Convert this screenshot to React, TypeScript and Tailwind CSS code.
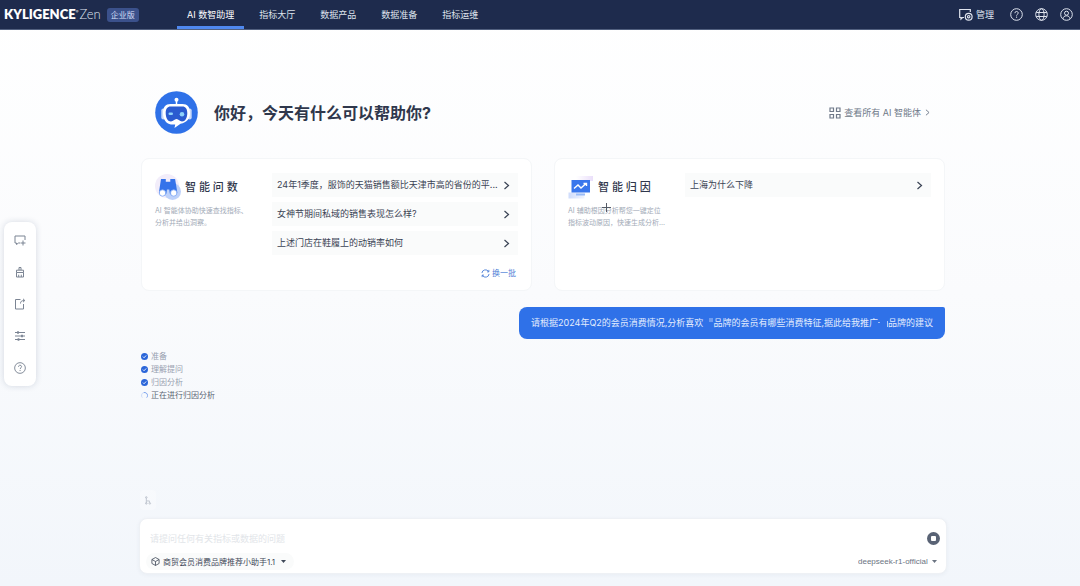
import { useState } from "react";
import type { ReactNode } from "react";

const navItems = ["AI 数智助理", "指标大厅", "数据产品", "数据准备", "指标运维"];

const askQuestions = [
  "24年1季度，服饰的天猫销售额比天津市高的省份的平...",
  "女神节期间私域的销售表现怎么样?",
  "上述门店在鞋履上的动销率如何",
];

const steps = [
  { label: "准备", done: true },
  { label: "理解提问", done: true },
  { label: "归因分析", done: true },
  { label: "正在进行归因分析", done: false },
];

export default function App() {
  const [question, setQuestion] = useState("");

  return (
    <div className="flex min-h-screen flex-col bg-linear-to-b from-white via-[#fafbfd] to-[#f2f6fb] font-[Inter,'Noto_Sans_CJK_SC',sans-serif] text-[#3d4659]">
      <Header />
      <SideTools />

      <main className="mx-auto flex w-full max-w-[816px] flex-1 flex-col pl-1.5">
        <div className="flex flex-1 flex-col px-[3px]">
          <div className="mt-[61px] flex items-center justify-between pr-[14px] pl-[14px]">
            <div className="flex items-center gap-4">
              <RobotAvatar />
              <h1 className="text-base font-bold text-[#2f374c]">你好，今天有什么可以帮助你?</h1>
            </div>
            <a href="#agents" className="flex items-center gap-[3px] text-[9px] text-[#6f7989]">
              <GridIcon />
              查看所有 AI 智能体
              <Chevron className="h-[7px] w-[7px]" />
            </a>
          </div>

          <div className="mt-6 grid grid-cols-2 gap-[22px]">
            <AgentCard
              icon={<BinocularsIcon />}
              title="智 能 问 数"
              lines={["AI 智能体协助快速查找指标、", "分析并给出洞察。"]}
              questions={askQuestions}
              refresh
            />
            <AgentCard
              icon={<ChartIcon />}
              title="智 能 归 因"
              lines={["AI 辅助根因分析帮您一键定位", "指标波动原因，快速生成分析..."]}
              questions={["上海为什么下降"]}
            />
          </div>

          <div className="mt-4 flex h-8 items-center self-end rounded-lg rounded-tr-xs bg-[#2f71e8] px-3 text-[9px] whitespace-nowrap text-[#e3ecfd]">
            <span>请根据2024年Q2的会员消费情况,分析喜欢</span>
            <span className="flex h-2.5 w-2.5 justify-end">
              <span className="h-1 w-1 bg-[#6e9cf0]" />
            </span>
            <span>品牌的会员有哪些消费特征,据此给我推广</span>
            <span className="flex h-2 w-2.5 items-end justify-between">
              <span className="mb-1 h-px w-0.5 bg-[#9dbcf5]" />
              <span className="h-1.5 w-px bg-[#b4ccf8]" />
            </span>
            <span>品牌的建议</span>
          </div>

          <ul className="mt-[11px] text-[8px] leading-[13px]">
            {steps.map((step) => (
              <li key={step.label} className={`flex items-center gap-[3px] ${step.done ? "text-[#98a1b0]" : "text-[#5b6473]"}`}>
                {step.done ? <DoneIcon /> : <LoadingIcon />}
                {step.label}
              </li>
            ))}
          </ul>
        </div>

        <button aria-label="拆解" className="mb-2 ml-0.5 flex h-5 w-4 items-center justify-center rounded-sm bg-white/30 text-[#bcc2cc]">
          <svg viewBox="0 0 8 10" className="h-[9px] w-[7px]" fill="none" stroke="currentColor">
            <path d="M1.5 2v6.5M1.5 5.5h3.5v2" />
            <circle cx="1.5" cy="1.5" r=".9" />
            <circle cx="1.5" cy="8.3" r=".9" />
            <circle cx="5.5" cy="8.3" r=".9" />
          </svg>
        </button>

        <form
          onSubmit={(e) => e.preventDefault()}
          className="mx-px mb-3 rounded-lg border border-[#eef1f5] bg-white pt-3 pr-1.5 pb-[3px] pl-1.5 shadow-[0_1px_4px_rgba(40,60,100,0.05)]"
        >
          <div className="flex items-center pl-1">
            <input
              aria-label="提问"
              value={question}
              onChange={(e) => setQuestion(e.target.value)}
              placeholder="请提问任何有关指标或数据的问题"
              className="h-[14px] min-w-0 flex-1 bg-transparent text-[9px] outline-none placeholder:text-[#e2e5e9]"
            />
            <button aria-label="停止" className="flex h-[13px] w-[13px] items-center justify-center rounded-full bg-[#596375]">
              <span className="h-[5px] w-[5px] rounded-[1px] bg-white" />
            </button>
          </div>
          <div className="mt-2 flex items-center justify-between text-[8px]">
            <label className="flex h-[17px] items-center gap-[3px] rounded-full bg-[#fafbfb] pr-2 pl-[5px] text-[#3f4858]">
              <CubeIcon />
              <select aria-label="智能体" className="mr-0.5 appearance-none bg-transparent outline-none">
                <option>商贸会员消费品牌推荐小助手1.1</option>
              </select>
              <Caret />
            </label>
            <label className="flex items-center gap-1 pr-[3px] text-[#6b7482]">
              <select aria-label="模型" className="appearance-none bg-transparent font-['Liberation_Sans',sans-serif] outline-none">
                <option>deepseek-r1-official</option>
              </select>
              <Caret />
            </label>
          </div>
        </form>
      </main>

      {/* Crosshair pointer */}
      <svg viewBox="0 0 9 9" className="pointer-events-none absolute top-[203px] left-[602px] h-[9px] w-[9px]" stroke="#555b66">
        <path d="M4.5 0v9M0 4.5h9" />
      </svg>
    </div>
  );
}

function Header() {
  return (
    <header className="flex h-[30px] items-stretch border-b border-[#52607f] bg-[#1e2b4d] text-[9px] text-[#dfe4ee]">
      <div className="flex w-[177px] items-center pl-1 text-white">
        <span className="font-[Lato,sans-serif] text-[13px] font-extrabold">KYLIGENCE</span>
        <span className="mb-1.5 text-[4px]">®</span>
        <span className="ml-px font-[Lato,sans-serif] text-[13px] font-light text-[#dfe4ee]">Zen</span>
        <span className="ml-1.5 flex h-[14px] items-center rounded-[3px] bg-[#3b518b] px-1 text-[8px] text-[#d3def7]">企业版</span>
      </div>
      <nav className="flex flex-1 items-stretch gap-[5px]">
        {navItems.map((item, i) => (
          <a
            key={item}
            href="#nav"
            className={`flex items-center border-b-[3px] px-2.5 ${i === 0 ? "border-[#4f88ef] pt-[3px] text-white" : "border-transparent pt-[3px]"}`}
          >
            {item}
          </a>
        ))}
      </nav>
      <div className="flex items-center gap-3 pr-[7px]">
        <button className="mr-1 flex items-center gap-[3px]">
          <svg viewBox="0 0 14 13" className="h-[13px] w-[14px]" fill="none" stroke="currentColor" strokeWidth="1.200">
            <path d="M5 9.5H3.5L2 11V9.5H.7v-8h10.6V4" />
            <circle cx="9.7" cy="8.7" r="3.4" />
            <circle cx="9.7" cy="8.7" r="1.2" />
          </svg>
          管理
        </button>
        <button aria-label="帮助">
          <HelpIcon className="h-[13px] w-[13px]" />
        </button>
        <button aria-label="语言">
          <svg viewBox="0 0 13 13" className="h-[13px] w-[13px]" fill="none" stroke="currentColor">
            <circle cx="6.5" cy="6.5" r="5.8" />
            <ellipse cx="6.5" cy="6.5" rx="2.6" ry="5.8" />
            <path d="M1.2 4.5h10.6M1.2 8.5h10.6" />
          </svg>
        </button>
        <button aria-label="账户">
          <svg viewBox="0 0 13 13" className="h-[13px] w-[13px]" fill="none" stroke="currentColor">
            <circle cx="6.5" cy="6.5" r="5.8" />
            <circle cx="6.5" cy="5.2" r="2" />
            <path d="M3 10.8c.3-2 1.500-3 3.500-3s3.200 1 3.500 3" />
          </svg>
        </button>
      </div>
    </header>
  );
}

function SideTools() {
  return (
    <aside className="fixed top-[222px] left-1 flex w-8 flex-col items-center gap-5 rounded-lg bg-white py-3 text-[#7b8493] shadow-[0_0_6px_rgba(40,60,100,0.18)]">
      <button aria-label="新对话">
        <svg viewBox="0 0 12 12" className="h-3 w-3" fill="none" stroke="currentColor">
          <path d="M11 6V2H1v7h1.500v1.500L4.500 9H6M9 6.500v5M6.500 9h5" />
        </svg>
      </button>
      <button aria-label="清空">
        <svg viewBox="0 0 12 12" className="h-3 w-3" fill="none" stroke="currentColor">
          <path d="M5 4V1.500h2V4M2.500 6.500V4.200h7v2.300zM2.500 6.500v4.500h7V6.500M4.700 11V8.700M7.300 11V8.700" />
        </svg>
      </button>
      <button aria-label="导出">
        <svg viewBox="0 0 12 12" className="h-3 w-3" fill="none" stroke="currentColor">
          <path d="M6.500 1.500h-5v9.500h8V6M6.500 5.500c0-2 1-3 4-3M9 .8l1.800 1.700L9 4.200" />
        </svg>
      </button>
      <button aria-label="设置">
        <svg viewBox="0 0 12 12" className="h-3 w-3" fill="none" stroke="currentColor">
          <path d="M1 2.500h10M1 6h10M1 9.500h10" />
          <path d="M4 1.300v2.400M8 4.800v2.400M4.500 8.300v2.400" strokeWidth="1.800" />
        </svg>
      </button>
      <button aria-label="帮助">
        <HelpIcon className="h-3 w-3" />
      </button>
    </aside>
  );
}

interface AgentCardProps {
  icon: ReactNode;
  title: string;
  lines: string[];
  questions: string[];
  refresh?: boolean;
}

function AgentCard({ icon, title, lines, questions, refresh }: AgentCardProps) {
  return (
    <section className="flex min-w-0 gap-3 rounded-lg border border-[#f4f6f8] bg-white px-[13px] pt-[14px] pb-[9px]">
      <div className="w-[105px] shrink-0 pt-px">
        <div className="flex items-center gap-1">
          {icon}
          <h2 className="text-[11px] font-medium whitespace-nowrap text-[#2f374c]">{title}</h2>
        </div>
        <p className="mt-[5px] text-[7px] leading-3 whitespace-nowrap text-[#a3abb8]">
          {lines.map((line) => (
            <span key={line} className="block">{line}</span>
          ))}
        </p>
      </div>
      <div className="flex min-w-0 flex-1 flex-col gap-[5px]">
        {questions.map((q) => (
          <button key={q} className="flex h-6 items-center justify-between bg-[#fafbfb] pr-2 pl-[5px] text-left text-[9px] whitespace-nowrap text-[#3a4354]">
            <span>{q}</span>
            <Chevron className="h-[9px] w-[7px] shrink-0" />
          </button>
        ))}
        {refresh && (
          <button className="mt-[5px] mr-0.5 flex h-4 items-center gap-0.5 self-end text-[8px] text-[#4c7fd6]">
            <svg viewBox="0 0 10 10" className="h-[9px] w-[9px]" fill="none" stroke="currentColor">
              <path d="M1 4.500A4 4 0 0 1 8.500 3M9 5.500A4 4 0 0 1 1.500 7M8.700 1v2.200H6.700M1.300 9V6.800h2" />
            </svg>
            换一批
          </button>
        )}
      </div>
    </section>
  );
}

// --- ICONS ---

function RobotAvatar() {
  return (
    <svg viewBox="0 0 43 43" className="h-[43px] w-[43px]">
      <circle cx="21.500" cy="21.500" r="21.300" fill="#2f71e8" />
      <path d="M21.500 10v4" stroke="#fff" strokeWidth="1.500" />
      <circle cx="21.500" cy="8.700" r="2" fill="#fff" />
      <rect x="6.300" y="17.500" width="4" height="11" rx="2" fill="#c9dafa" />
      <rect x="32.700" y="17.500" width="4" height="11" rx="2" fill="#c9dafa" />
      <path d="M15.500 13h12c5 0 7.500 3 7.500 9 0 6-3 9.300-9.500 10.800L19.500 37l.7-3.500H16c-5-1-8-5-8-11.500 0-6 2.500-9 7.500-9z" fill="#fff" />
      <path d="M15.500 15.500h12c3 0 4.800 2.200 4.800 6.500 0 5-2.300 8.500-5.300 8.500-2.300 0-3.300-2.500-5.500-2.500s-3.200 2.500-5.500 2.500c-3 0-5.300-3.500-5.300-8.500 0-4.300 1.800-6.500 4.800-6.500z" fill="#2b5bd0" />
      <rect x="13.500" y="21.500" width="4.500" height="2.600" rx="1.300" fill="#8fd3fb" />
      <circle cx="27" cy="23.300" r="2.300" fill="#8fd3fb" />
    </svg>
  );
}

function BinocularsIcon() {
  return (
    <svg viewBox="0 0 26 26" className="h-[26px] w-[26px] shrink-0">
      <circle cx="12" cy="12" r="12" fill="#f2edfa" />
      <circle cx="17.500" cy="17.500" r="8.500" fill="#bdd1fa" />
      <path d="M6 5h4.800v2.700h4.500V5h4.800l2.200 13.500a4 4 0 0 1-7.500 1l-.5-4h-2.400l-.5 4a4 4 0 0 1-7.500-1z" fill="#3473ea" />
      <circle cx="7.500" cy="19" r="3.200" fill="#fff" stroke="#7aa5f4" strokeWidth=".8" />
      <circle cx="18.700" cy="19" r="3.200" fill="#fff" stroke="#7aa5f4" strokeWidth=".8" />
    </svg>
  );
}

function ChartIcon() {
  return (
    <svg viewBox="0 0 26 26" className="h-[26px] w-[26px] shrink-0">
      <defs>
        <linearGradient id="tileTop" x1="0" x2="1">
          <stop offset="0" stopColor="#fff" />
          <stop offset="1" stopColor="#eadffa" />
        </linearGradient>
        <linearGradient id="tileBottom" x1="0" x2="1">
          <stop offset="0" stopColor="#cfdcfb" />
          <stop offset="1" stopColor="#f2f5fe" />
        </linearGradient>
      </defs>
      <path d="M8 2h17v5H8z" fill="url(#tileTop)" />
      <path d="M.5 18.500h16v6H.5z" fill="url(#tileBottom)" />
      <path d="M3.500 6h18.500v12.500h-18.500z" fill="#3a77ec" />
      <path d="M8 19.500h9v2H8z" fill="#9bbcf7" />
      <path d="M6 14.500l4-3.500 3 3 5-4.500M15.500 9.500h3v2.500" fill="none" stroke="#fff" strokeWidth="1.400" />
    </svg>
  );
}

function HelpIcon({ className }: { className: string }) {
  return (
    <svg viewBox="0 0 13 13" className={className} fill="none" stroke="currentColor">
      <circle cx="6.500" cy="6.500" r="5.800" />
      <path d="M4.900 5.200c0-2.400 3.400-2.200 3.300-.1 0 1.200-1.600 1.200-1.600 2.500M6.600 8.600v1.200" />
    </svg>
  );
}

function GridIcon() {
  return (
    <svg viewBox="0 0 12 12" className="h-3 w-3" fill="none" stroke="currentColor" strokeWidth="1.200">
      <path d="M1 1h3.500v3.500H1zM7.500 1H11v3.500H7.500zM1 7.500h3.500V11H1zM7.500 7.500H11V11H7.500z" />
    </svg>
  );
}

function Chevron({ className }: { className: string }) {
  return (
    <svg viewBox="0 0 7 9" className={className} fill="none" stroke="currentColor" strokeWidth="1.200">
      <path d="M1.500 1l4 3.500-4 3.500" />
    </svg>
  );
}

function Caret() {
  return (
    <svg viewBox="0 0 5 3" className="h-[3px] w-[5px]" fill="currentColor">
      <path d="M0 0h5L2.500 3z" />
    </svg>
  );
}

function CubeIcon() {
  return (
    <svg viewBox="0 0 10 10" className="h-[9px] w-[9px]" fill="none" stroke="currentColor" strokeWidth=".9">
      <path d="M5 .6l4 2.200v4.400L5 9.400 1 7.200V2.800zM1 2.800L5 5l4-2.200M5 5v4.400" />
    </svg>
  );
}

function DoneIcon() {
  return (
    <svg viewBox="0 0 8 8" className="h-[7px] w-[7px]">
      <circle cx="4" cy="4" r="4" fill="#2b66d9" />
      <path d="M2.200 4.100l1.300 1.300 2.400-2.600" fill="none" stroke="#fff" />
    </svg>
  );
}

function LoadingIcon() {
  return (
    <svg viewBox="0 0 8 8" className="h-[7px] w-[7px]" fill="none">
      <path d="M3 .7A3.500 3.500 0 0 1 7.500 4 3.500 3.500 0 0 1 6.500 6.400" stroke="#6d98ea" />
      <path d="M3 .7A3.500 3.500 0 0 0 1.500 6.400" stroke="#c6d7f7" />
    </svg>
  );
}
